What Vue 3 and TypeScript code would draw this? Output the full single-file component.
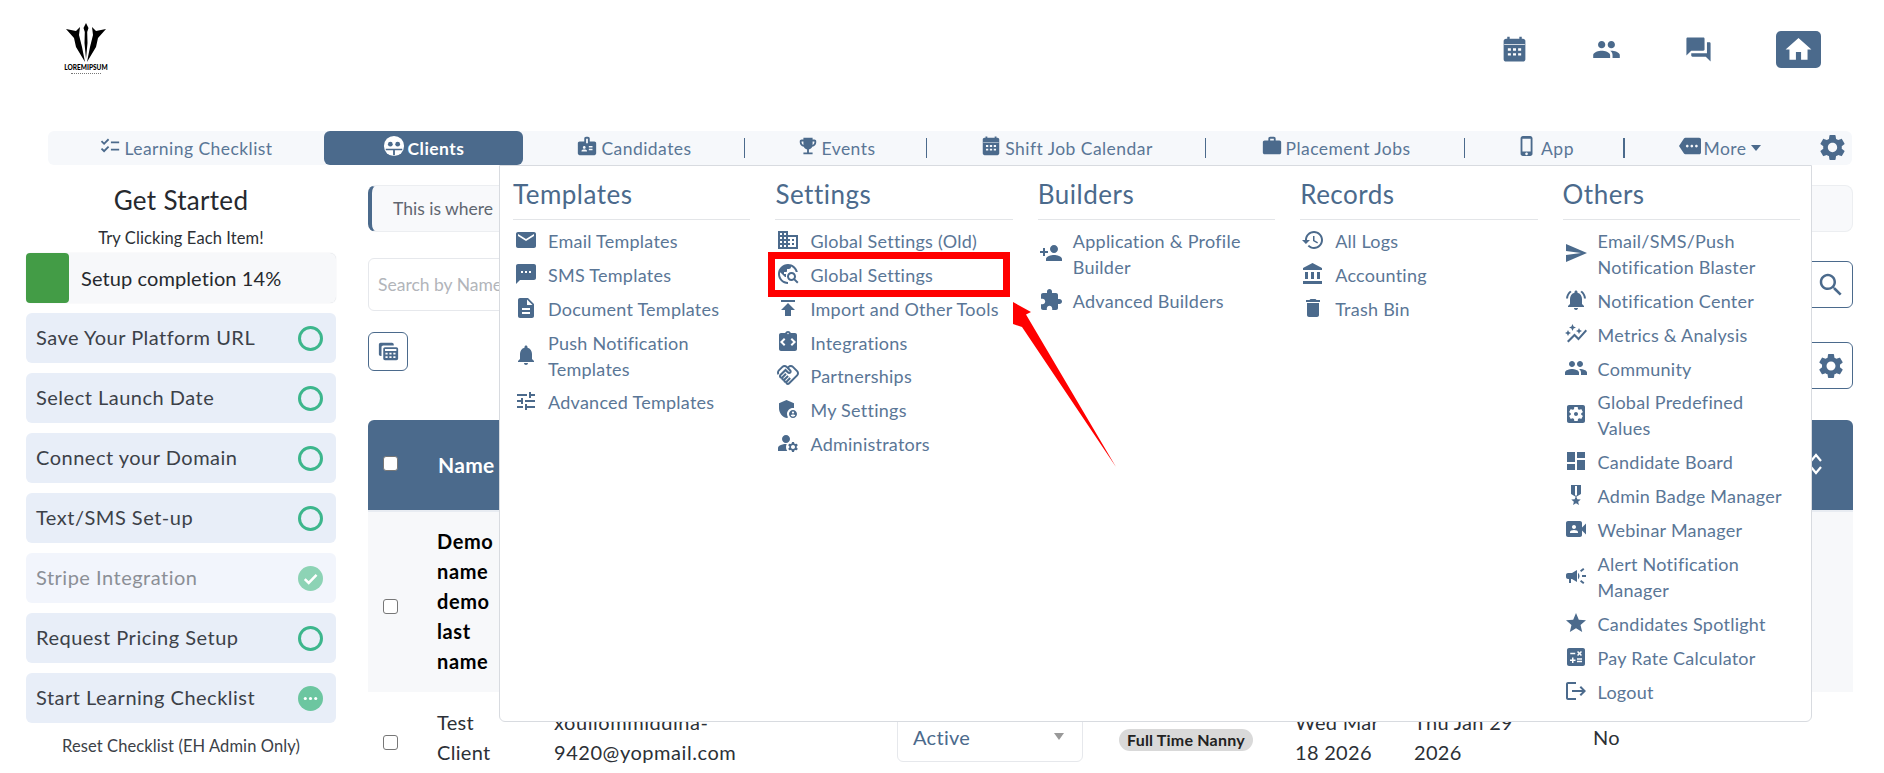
<template>
  <div class="page">
    <header class="top">
      <div class="logo">
        <svg class="logo-mark" viewBox="0 0 44 42">
          <path d="M22 2l2.500 5-1.300 4 .3 11L22 38l-1.500-16 .3-11-1.300-4z" />
          <path d="M2 8l10 2 4-4-1 8 3 12 3 15-9-15-2-9z" />
          <path d="M42 8l-10 2-4-4 1 8-3 12-3 15 9-15 2-9z" />
        </svg>
        <span class="logo-text">LOREMIPSUM</span>
        <span class="logo-sub"></span>
      </div>
      <div class="top-icons">
        <svg class="top-icon calendar" viewBox="0 0 24 24"><path :d="icons.calendarTop" /></svg>
        <svg class="top-icon" viewBox="0 0 24 24"><path :d="icons.people" /></svg>
        <svg class="top-icon" viewBox="0 0 24 24"><path :d="icons.forum" /></svg>
        <div class="home"><svg viewBox="0 0 24 24"><path :d="icons.home" /></svg></div>
      </div>
    </header>

    <nav class="nav">
      <a
        v-for="tab in tabs"
        :key="tab.label"
        class="tab"
        :class="{ active: tab.active, sep: tab.sep, thick: tab.thick }"
        :style="{ width: tab.width + 'px' }"
      >
        <svg v-if="tab.icon !== 'clients'" viewBox="0 0 24 24"><path :d="icons[tab.icon]" /></svg>
        <svg v-else viewBox="0 0 24 24">
          <circle cx="12" cy="12" r="11" fill="#fff" />
          <circle cx="8" cy="10" r="2.600" fill="#4b6a8c" />
          <circle cx="16" cy="10" r="2.600" fill="#4b6a8c" />
          <path d="M3 15h18v1.500H13V22h-2v-5.500H3z" fill="#4b6a8c" />
        </svg>
        <span>{{ tab.label }}</span>
        <i v-if="tab.caret" class="caret"></i>
      </a>
      <svg class="nav-gear" viewBox="0 0 24 24"><path :d="icons.settings" /></svg>

      <div class="menu">
        <section v-for="col in menu" :key="col.title" class="menu-col">
          <h3>{{ col.title }}</h3>
          <a v-for="item in col.items" :key="item.label" class="menu-item">
            <svg viewBox="0 0 24 24"><path :d="icons[item.icon]" /></svg>
            <span>{{ item.label }}</span>
          </a>
        </section>
      </div>
    </nav>

    <div class="body">
      <aside class="side">
        <h2>Get Started</h2>
        <p class="hint">Try Clicking Each Item!</p>
        <div class="progress">
          <div class="progress-fill" :style="{ width: '43px' }"></div>
          <span>Setup completion 14%</span>
        </div>
        <div v-for="step in steps" :key="step.label" class="step" :class="{ done: step.state === 'done' }">
          <span>{{ step.label }}</span>
          <i v-if="step.state === 'todo'" class="ring"></i>
          <svg v-else-if="step.state === 'done'" class="state" viewBox="0 0 24 24">
            <circle cx="12" cy="12" r="12" fill="#8dd3b5" />
            <path d="M6.500 12.500l3.800 3.800 7.500-7.800" fill="none" stroke="#fff" stroke-width="2.400" />
          </svg>
          <svg v-else class="state" viewBox="0 0 24 24">
            <circle cx="12" cy="12" r="12" fill="#6cc6a0" />
            <circle cx="7" cy="12" r="1.500" fill="#fff" />
            <circle cx="12" cy="12" r="1.500" fill="#fff" />
            <circle cx="17" cy="12" r="1.500" fill="#fff" />
          </svg>
        </div>
        <p class="reset">Reset Checklist (EH Admin Only)</p>
      </aside>

      <main class="main">
        <div class="banner">This is where</div>
        <div class="filters">
          <input class="search" type="text" placeholder="Search by Name" />
          <button class="icon-btn tall"><svg viewBox="0 0 24 24"><path :d="icons.search" /></svg></button>
        </div>
        <div class="tools">
          <button class="icon-btn small">
            <svg viewBox="0 0 24 24"><path :d="icons.tableCalc" /></svg>
          </button>
          <button class="icon-btn tall lower"><svg viewBox="0 0 24 24"><path :d="icons.settings" /></svg></button>
        </div>

        <div class="thead row">
          <input class="check head-check" type="checkbox" />
          <span class="th">Name</span>
          <svg class="sort" viewBox="0 0 14 24">
            <path d="M2 9l5-6 5 6M2 15l5 6 5-6" fill="none" stroke="#fff" stroke-width="2.200" />
          </svg>
        </div>
        <div class="row first">
          <input class="check" type="checkbox" />
          <span class="name strong">Demo name demo last name</span>
        </div>
        <div class="row second">
          <input class="check" type="checkbox" />
          <span class="name">Test Client</span>
          <span class="email">xouilommiddina-9420@yopmail.com</span>
          <div class="select-col">
            <div class="select">Active<i></i></div>
          </div>
          <div class="badge-col"><span class="badge">Full Time Nanny</span></div>
          <span class="date">Wed Mar 18 2026</span>
          <span class="date wide">Thu Jan 29 2026</span>
          <span class="no">No</span>
        </div>
      </main>
    </div>

    <!-- annotation drawn on top of the screenshot -->
    <div class="mark"></div>
    <svg class="arrow" viewBox="0 0 120 170">
      <path d="M3 2L21 12 16 14.500 106 167 12 27 3 24z" fill="#ff0000" />
    </svg>
  </div>
</template>

<script setup lang="ts">
const icons: Record<string, string> = {
  calendarTop:
    "M5 3h1V1.500h2V3h8V1.500h2V3h1c1.100 0 2 .9 2 2v15c0 1.100-.9 2-2 2H5c-1.100 0-2-.9-2-2V5c0-1.100.9-2 2-2zM3.500 7.500v.6h17v-.6zM6.500 11v2h2.500v-2zM10.750 11v2h2.500v-2zM15 11v2h2.500v-2zM6.500 15v2h2.500v-2zM10.750 15v2h2.500v-2zM15 15v2h2.500v-2z",
  people:
    "M16 11c1.660 0 2.990-1.340 2.990-3S17.660 5 16 5c-1.660 0-3 1.340-3 3s1.340 3 3 3zm-8 0c1.660 0 2.990-1.340 2.990-3S9.660 5 8 5C6.340 5 5 6.340 5 8s1.340 3 3 3zm0 2c-2.330 0-7 1.170-7 3.500V19h14v-2.500c0-2.330-4.670-3.500-7-3.500zm8 0c-.29 0-.62.02-.97.05 1.160.84 1.970 1.970 1.970 3.450V19h6v-2.500c0-2.330-4.670-3.500-7-3.500z",
  forum:
    "M21 6h-2v9H6v2c0 .55.45 1 1 1h11l4 4V7c0-.55-.45-1-1-1zm-4 6V3c0-.55-.45-1-1-1H3c-.55 0-1 .45-1 1v14l4-4h10c.55 0 1-.45 1-1z",
  home: "M10 20v-6h4v6h5v-8h3L12 3 2 12h3v8z",
  settings:
    "M19.140 12.940c.04-.3.06-.61.06-.94 0-.32-.02-.64-.07-.94l2.030-1.580c.18-.14.23-.41.12-.61l-1.920-3.320c-.12-.22-.37-.29-.59-.22l-2.390.96c-.5-.38-1.030-.7-1.620-.94l-.36-2.540c-.04-.24-.24-.41-.48-.41h-3.840c-.24 0-.43.17-.47.41l-.36 2.540c-.59.24-1.130.57-1.620.94l-2.390-.96c-.22-.08-.47 0-.59.22L2.740 8.870c-.12.21-.08.47.12.61l2.030 1.580c-.05.3-.09.63-.09.94s.02.64.07.94l-2.030 1.580c-.18.14-.23.41-.12.61l1.920 3.320c.12.22.37.29.59.22l2.390-.96c.5.38 1.030.7 1.620.94l.36 2.540c.05.24.24.41.48.41h3.840c.24 0 .44-.17.47-.41l.36-2.540c.59-.24 1.130-.56 1.620-.94l2.390.96c.22.08.47 0 .59-.22l1.920-3.320c.12-.22.07-.47-.12-.61l-2.010-1.580zM12 15.600c-1.980 0-3.600-1.620-3.600-3.600s1.620-3.600 3.600-3.600 3.600 1.620 3.600 3.600-1.620 3.600-3.600 3.600z",
  search:
    "M15.500 14h-.79l-.28-.27C15.410 12.590 16 11.110 16 9.500 16 5.910 13.090 3 9.500 3S3 5.910 3 9.500 5.910 16 9.500 16c1.610 0 3.090-.59 4.230-1.570l.27.28v.79l5 4.990L20.490 19l-4.990-5zm-6 0C7.010 14 5 11.990 5 9.500S7.010 5 9.500 5 14 7.010 14 9.500 11.990 14 9.500 14z",
  checklist:
    "M22 7h-9v2h9V7zm0 8h-9v2h9v-2zM5.540 11L2 7.460l1.410-1.410 2.120 2.120 4.240-4.240 1.410 1.410L5.540 11zm0 8L2 15.460l1.410-1.410 2.120 2.120 4.240-4.240 1.410 1.410L5.540 19z",
  badge:
    "M20 7h-5V4c0-1.100-.9-2-2-2h-2c-1.100 0-2 .9-2 2v3H4c-1.100 0-2 .9-2 2v11c0 1.100.9 2 2 2h16c1.100 0 2-.9 2-2V9c0-1.100-.9-2-2-2zM9 12c.83 0 1.500.67 1.500 1.500S9.830 15 9 15s-1.500-.67-1.500-1.500S8.170 12 9 12zm3 6H6v-.75c0-1 2-1.500 3-1.500s3 .5 3 1.500V18zm1-9h-2V4h2v5zm5 7.500h-4V15h4v1.500zm0-3h-4V12h4v1.500z",
  trophy:
    "M19 5h-2V3H7v2H5c-1.100 0-2 .9-2 2v1c0 2.550 1.920 4.630 4.390 4.940.63 1.500 1.980 2.630 3.610 2.960V19H7v2h10v-2h-4v-3.100c1.630-.33 2.980-1.460 3.610-2.960C19.080 12.630 21 10.550 21 8V7c0-1.100-.9-2-2-2zM5 8V7h2v3.820C5.840 10.400 5 9.300 5 8zm14 0c0 1.300-.84 2.400-2 2.820V7h2v1z",
  work: "M20 6h-4V4c0-1.100-.9-2-2-2h-4c-1.100 0-2 .9-2 2v2H4c-1.100 0-1.990.9-1.990 2L2 19c0 1.100.9 2 2 2h16c1.100 0 2-.9 2-2V8c0-1.100-.9-2-2-2zm-6 0h-4V4h4v2z",
  phone:
    "M15.500 1h-8C6.120 1 5 2.120 5 3.500v17C5 21.880 6.120 23 7.500 23h8c1.380 0 2.500-1.120 2.500-2.500v-17C18 2.120 16.880 1 15.500 1zm-4 21c-.83 0-1.500-.67-1.500-1.500s.67-1.500 1.500-1.500 1.500.67 1.500 1.500-.67 1.500-1.500 1.500zm4.500-4H7V4h9v14z",
  more: "M22 3H7c-.69 0-1.230.35-1.590.88L0 12l5.410 8.110c.36.53.9.89 1.590.89h15c1.100 0 2-.9 2-2V5c0-1.100-.9-2-2-2zM9 13.500c-.83 0-1.500-.67-1.500-1.500s.67-1.500 1.500-1.500 1.500.67 1.500 1.500-.67 1.500-1.500 1.500zm5 0c-.83 0-1.500-.67-1.500-1.500s.67-1.500 1.500-1.500 1.500.67 1.500 1.500-.67 1.500-1.500 1.500zm5 0c-.83 0-1.500-.67-1.500-1.500s.67-1.500 1.500-1.500 1.500.67 1.500 1.500-.67 1.500-1.500 1.500z",
  email: "M20 4H4c-1.100 0-1.990.9-1.990 2L2 18c0 1.100.9 2 2 2h16c1.100 0 2-.9 2-2V6c0-1.100-.9-2-2-2zm0 4l-8 5-8-5V6l8 5 8-5v2z",
  sms: "M20 2H4c-1.100 0-1.990.9-1.990 2L2 22l4-4h14c1.100 0 2-.9 2-2V4c0-1.100-.9-2-2-2zM9 11H7V9h2v2zm4 0h-2V9h2v2zm4 0h-2V9h2v2z",
  doc: "M14 2H6c-1.100 0-1.990.9-1.990 2L4 20c0 1.100.89 2 1.990 2H18c1.100 0 2-.9 2-2V8l-6-6zm2 16H8v-2h8v2zm0-4H8v-2h8v2zm-3-5V3.500L18.500 9H13z",
  bell: "M12 22c1.100 0 2-.9 2-2h-4c0 1.100.89 2 2 2zm6-6v-5c0-3.070-1.640-5.640-4.500-6.320V4c0-.83-.67-1.500-1.500-1.500s-1.500.67-1.500 1.500v.68C7.630 5.360 6 7.920 6 11v5l-2 2v1h16v-1l-2-2z",
  tune: "M3 17v2h6v-2H3zM3 5v2h10V5H3zm10 16v-2h8v-2h-8v-2h-2v6h2zM7 9v2H3v2h4v2h2V9H7zm14 4v-2H11v2h10zm-6-4h2V7h4V5h-4V3h-2v6z",
  domain:
    "M12 7V3H2v18h20V7H12zM6 19H4v-2h2v2zm0-4H4v-2h2v2zm0-4H4V9h2v2zm0-4H4V5h2v2zm4 12H8v-2h2v2zm0-4H8v-2h2v2zm0-4H8V9h2v2zm0-4H8V5h2v2zm10 12h-8v-2h2v-2h-2v-2h2v-2h-2V9h8v10zm-2-8h-2v2h2v-2zm0 4h-2v2h2v-2z",
  explore:
    "M19.300 16.900c.4-.7.7-1.500.7-2.400 0-2.500-2-4.500-4.500-4.500S11 12 11 14.500s2 4.500 4.500 4.500c.9 0 1.700-.3 2.400-.7l3.200 3.200 1.400-1.400-3.200-3.200zm-3.800.1c-1.400 0-2.500-1.100-2.500-2.500s1.100-2.500 2.500-2.500 2.500 1.100 2.500 2.500-1.100 2.500-2.500 2.500zM12 20v2C6.480 22 2 17.520 2 12S6.480 2 12 2c4.840 0 8.870 3.440 9.800 8h-2.070c-.64-2.460-2.400-4.470-4.730-5.410V5c0 1.100-.9 2-2 2h-2v2c0 .55-.45 1-1 1H8v2h2v3H9l-4.790-4.790C4.080 10.790 4 11.380 4 12c0 4.410 3.590 8 8 8z",
  publish: "M5 4v2h14V4H5zm0 10h4v6h6v-6h4l-7-7-7 7z",
  integrations:
    "M19 3h-4.180C14.400 1.840 13.300 1 12 1s-2.400.84-2.820 2H5c-1.100 0-2 .9-2 2v14c0 1.100.9 2 2 2h14c1.100 0 2-.9 2-2V5c0-1.100-.9-2-2-2zm-7-.25c.41 0 .75.34.75.75s-.34.75-.75.75-.75-.34-.75-.75.34-.75.75-.75zM9.410 14.590L8 16l-4-4 4-4 1.410 1.410L6.830 12l2.580 2.590zM16 16l-1.410-1.410L17.170 12l-2.580-2.590L16 8l4 4-4 4z",
  handshake:
    "M12.220 19.850c-.18.18-.5.21-.71 0-.18-.18-.21-.5 0-.71l3.390-3.390-1.410-1.410-3.390 3.390c-.19.2-.51.19-.71 0-.21-.21-.18-.53 0-.71l3.390-3.390-1.410-1.410-3.390 3.390c-.18.18-.5.21-.71 0-.19-.19-.19-.51 0-.71l3.390-3.390-1.420-1.410-3.390 3.390c-.18.18-.5.21-.71 0-.19-.2-.19-.51 0-.71L9.520 8.400l1.870 1.860c.95.95 2.590.94 3.540 0 .98-.98.98-2.560 0-3.540l-1.860-1.860.28-.28c.78-.78 2.050-.78 2.830 0l4.240 4.240c.78.78.78 2.050 0 2.830l-8.200 8.200zm9.610-6.780c1.560-1.560 1.560-4.090 0-5.660l-4.240-4.240c-1.560-1.560-4.090-1.560-5.660 0l-.28.28-.28-.28c-1.560-1.560-4.090-1.560-5.660 0L2.170 6.710c-1.420 1.420-1.550 3.630-.4 5.190l1.450-1.450c-.39-.75-.26-1.700.37-2.330l3.540-3.540c.78-.78 2.050-.78 2.830 0l3.560 3.560c.18.18.21.5 0 .71-.21.21-.53.18-.71 0L9.520 5.570l-5.800 5.790c-.98.97-.98 2.560 0 3.540.39.39.89.63 1.420.7.07.52.3 1.020.7 1.420.4.4.9.63 1.420.7.07.52.3 1.020.7 1.420.4.4.9.63 1.420.7.07.54.31 1.030.7 1.420.47.47 1.100.73 1.770.73.67 0 1.300-.26 1.770-.73l8.210-8.190z",
  shield:
    "M17 11c.34 0 .67.04 1 .09V6.270L10.500 3 3 6.270v4.910c0 4.540 3.200 8.790 7.500 9.820.55-.13 1.080-.32 1.600-.55-.69-.98-1.100-2.170-1.100-3.450 0-3.310 2.690-6 6-6zM17 13c-2.210 0-4 1.790-4 4s1.790 4 4 4 4-1.790 4-4-1.790-4-4-4zm0 1.380c.62 0 1.120.51 1.120 1.120s-.51 1.120-1.120 1.120-1.120-.51-1.120-1.120.5-1.120 1.120-1.120zm0 5.370c-.93 0-1.740-.46-2.240-1.170.05-.72 1.510-1.080 2.240-1.080s2.190.36 2.240 1.080c-.5.71-1.310 1.170-2.240 1.170z",
  admins:
    "M10 4c-2.210 0-4 1.790-4 4s1.790 4 4 4 4-1.790 4-4-1.790-4-4-4zM10.670 13.020c-.22-.01-.44-.02-.67-.02-2.420 0-4.680.67-6.610 1.820-.88.52-1.390 1.500-1.390 2.530V20h9.260c-.79-1.130-1.260-2.510-1.260-4 0-1.070.25-2.070.67-2.980zM20.750 16c0-.22-.03-.42-.06-.63l1.140-1.010-1-1.730-1.450.49c-.32-.27-.68-.48-1.080-.63L18 11h-2l-.3 1.490c-.4.15-.76.36-1.080.63l-1.450-.49-1 1.730 1.140 1.010c-.03.21-.06.41-.06.63s.03.42.06.63l-1.140 1.010 1 1.730 1.450-.49c.32.27.68.48 1.080.63L16 21h2l.3-1.490c.4-.15.76-.36 1.080-.63l1.450.49 1-1.730-1.140-1.010c.03-.21.06-.41.06-.63zM17 18c-1.100 0-2-.9-2-2s.9-2 2-2 2 .9 2 2-.9 2-2 2z",
  personAdd:
    "M15 12c2.210 0 4-1.790 4-4s-1.790-4-4-4-4 1.790-4 4 1.790 4 4 4zm-9-2V7H4v3H1v2h3v3h2v-3h3v-2H6zm9 4c-2.670 0-8 1.340-8 4v2h16v-2c0-2.660-5.330-4-8-4z",
  extension:
    "M20.500 11H19V7c0-1.100-.9-2-2-2h-4V3.500C13 2.120 11.880 1 10.500 1S8 2.120 8 3.500V5H4c-1.100 0-1.990.9-1.990 2v3.800H3.500c1.490 0 2.700 1.210 2.700 2.700s-1.210 2.700-2.700 2.700H2V20c0 1.100.9 2 2 2h3.800v-1.500c0-1.490 1.210-2.700 2.700-2.700 1.490 0 2.700 1.210 2.700 2.700V22H17c1.100 0 2-.9 2-2v-4h1.500c1.380 0 2.500-1.120 2.500-2.500S21.880 11 20.500 11z",
  history:
    "M13 3c-4.970 0-9 4.030-9 9H1l3.890 3.890.07.14L9 12H6c0-3.870 3.130-7 7-7s7 3.130 7 7-3.130 7-7 7c-1.930 0-3.680-.79-4.940-2.060l-1.420 1.420C8.270 19.990 10.510 21 13 21c4.970 0 9-4.030 9-9s-4.030-9-9-9zm-1 5v5l4.280 2.540.72-1.210-3.500-2.080V8H12z",
  bank: "M4 10v7h3v-7H4zm6 0v7h3v-7h-3zM2 22h19v-3H2v3zm14-12v7h3v-7h-3zm-4.500-9L2 6v2h19V6l-9.500-5z",
  trash: "M6 19c0 1.100.9 2 2 2h8c1.100 0 2-.9 2-2V7H6v12zM19 4h-3.500l-1-1h-5l-1 1H5v2h14V4z",
  send: "M2.010 21L23 12 2.010 3 2 10l15 2-15 2z",
  bellActive:
    "M7.580 4.080L6.150 2.650C3.750 4.480 2.170 7.300 2.030 10.500h2c.15-2.650 1.510-4.970 3.550-6.420zm12.390 6.420h2c-.15-3.200-1.730-6.020-4.120-7.850l-1.420 1.430c2.020 1.450 3.390 3.770 3.540 6.420zM18 11c0-3.070-1.640-5.640-4.500-6.320V4c0-.83-.67-1.500-1.500-1.500s-1.500.67-1.500 1.500v.68C7.630 5.360 6 7.920 6 11v5l-2 2v1h16v-1l-2-2v-5zm-6 11c.14 0 .27-.01.4-.04.65-.14 1.180-.58 1.440-1.180.1-.24.15-.5.15-.78h-4c.01 1.100.9 2 2.010 2z",
  graph:
    "M14.060 9.940L12 9l2.060-.94L15 6l.94 2.060L18 9l-2.060.94L15 12zM4 14l.94-2.060L7 11l-2.060-.94L4 8l-.94 2.060L1 11l2.060.94zm4.500-5l1.090-2.410L12 5.500 9.590 4.410 8.500 2 7.410 4.410 5 5.500l2.410 1.090zm-4 11.500l6-6.010 4 4L23 8.930l-1.410-1.410-7.090 7.970-4-4L3 19z",
  predefined:
    "M12 10c-1.100 0-2 .9-2 2s.9 2 2 2 2-.9 2-2-.9-2-2-2zm7-7H5c-1.110 0-2 .9-2 2v14c0 1.100.89 2 2 2h14c1.110 0 2-.9 2-2V5c0-1.100-.89-2-2-2zm-1.750 9c0 .23-.02.46-.05.68l1.480 1.160c.13.11.17.3.08.45l-1.400 2.420c-.09.15-.27.21-.43.15l-1.740-.7c-.36.28-.76.51-1.180.69l-.26 1.850c-.03.17-.18.3-.35.3h-2.800c-.17 0-.32-.13-.35-.29l-.26-1.850c-.43-.18-.82-.41-1.180-.69l-1.740.7c-.16.06-.34 0-.43-.15l-1.400-2.420c-.09-.15-.05-.34.08-.45l1.480-1.160c-.03-.23-.05-.46-.05-.69 0-.23.02-.46.05-.68l-1.480-1.160c-.13-.11-.17-.3-.08-.45l1.400-2.420c.09-.15.27-.21.43-.15l1.740.7c.36-.28.76-.51 1.180-.69l.26-1.850c.03-.17.18-.3.35-.3h2.800c.17 0 .32.13.35.29l.26 1.850c.43.18.82.41 1.180.69l1.740-.7c.16-.06.34 0 .43.15l1.400 2.420c.09.15.05.34-.08.45l-1.480 1.160c.03.23.05.46.05.69z",
  dashboard: "M3 13h8V3H3v10zm0 8h8v-6H3v6zm10 0h8V11h-8v10zm0-18v6h8V3h-8z",
  medal:
    "M17 10.430V2H7v8.430c0 .35.18.68.49.86l4.180 2.510-.99 2.340-3.410.29 2.590 2.240L9.070 22 12 20.230 14.930 22l-.78-3.330 2.590-2.240-3.410-.29-.99-2.340 4.180-2.510c.3-.18.48-.5.48-.86zm-4 1.800l-1 .6-1-.6V3h2v9.230z",
  webinar:
    "M18 10.480V6c0-1.100-.9-2-2-2H4c-1.100 0-2 .9-2 2v12c0 1.100.9 2 2 2h12c1.100 0 2-.9 2-2v-4.480l4 3.980v-11l-4 3.980zM10 8c1.100 0 2 .9 2 2s-.9 2-2 2-2-.9-2-2 .9-2 2-2zm4 8H6v-.57c0-.81.48-1.530 1.220-1.850.85-.37 1.790-.58 2.780-.58.99 0 1.930.21 2.780.58.74.32 1.220 1.040 1.220 1.850V16z",
  campaign:
    "M18 11v2h4v-2h-4zm-2 6.610c.96.71 2.210 1.650 3.200 2.390.4-.53.8-1.070 1.200-1.600-.99-.74-2.240-1.680-3.200-2.400-.4.54-.8 1.080-1.200 1.610zM20.400 5.600c-.4-.53-.8-1.070-1.200-1.600-.99.74-2.240 1.680-3.200 2.400.4.53.8 1.070 1.200 1.600.96-.72 2.210-1.650 3.200-2.400zM4 9c-1.100 0-2 .9-2 2v2c0 1.100.9 2 2 2h1v4h2v-4h1l5 3V6L8 9H4zm11.500 3c0-1.330-.58-2.530-1.500-3.350v6.690c.92-.81 1.500-2.010 1.500-3.340z",
  star: "M12 17.270L18.180 21l-1.640-7.030L22 9.240l-7.190-.61L12 2 9.190 8.630 2 9.240l5.460 4.730L5.820 21z",
  calc: "M19 3H5c-1.100 0-2 .9-2 2v14c0 1.100.9 2 2 2h14c1.100 0 2-.9 2-2V5c0-1.100-.9-2-2-2zm-5.970 4.060L14.090 6l1.410 1.410L16.910 6l1.060 1.060-1.410 1.410 1.410 1.410-1.060 1.060-1.410-1.400-1.410 1.410-1.060-1.060 1.410-1.410-1.410-1.420zm-6.780.66h5v1.500h-5v-1.500zM11.500 16h-2v2H8v-2H6v-1.500h2v-2h1.500v2h2V16zm6.500 1.250h-5v-1.500h5v1.500zm0-2.500h-5v-1.500h5v1.500z",
  logout: "M17 7l-1.410 1.410L18.170 11H8v2h10.170l-2.580 2.580L17 17l5-5zM4 5h8V3H4c-1.100 0-2 .9-2 2v14c0 1.100.9 2 2 2h8v-2H4V5z",
  tableCalc:
    "M3 2h13c1 0 2 1 2 2v1H6C4.900 5 4 5.900 4 7v10H3c-1 0-2-1-2-2V4c0-1 1-2 2-2zM8 7h13c1.100 0 2 .9 2 2v11c0 1.100-.9 2-2 2H8c-1.100 0-2-.9-2-2V9c0-1.100.9-2 2-2zM8 9v2.500h13V9zM8.500 13.500v2h2.500v-2zM13 13.500v2h2.500v-2zM17.500 13.500v2H20v-2zM8.500 17.500v2h2.500v-2zM13 17.500v2h2.500v-2zM17.500 17.500v2H20v-2z",
};

interface Tab {
  label: string;
  icon: string;
  width: number;
  active?: boolean;
  sep?: boolean;
  thick?: boolean;
  caret?: boolean;
}

const tabs: Tab[] = [
  { label: "Learning Checklist", icon: "checklist", width: 276 },
  { label: "Clients", icon: "clients", width: 199, active: true },
  { label: "Candidates", icon: "badge", width: 222, sep: true },
  { label: "Events", icon: "trophy", width: 182, sep: true },
  { label: "Shift Job Calendar", icon: "calendarTop", width: 279, sep: true },
  { label: "Placement Jobs", icon: "work", width: 259, sep: true },
  { label: "App", icon: "phone", width: 160, sep: true, thick: true },
  { label: "More", icon: "more", width: 190, caret: true },
];

const menu = [
  {
    title: "Templates",
    items: [
      { label: "Email Templates", icon: "email" },
      { label: "SMS Templates", icon: "sms" },
      { label: "Document Templates", icon: "doc" },
      { label: "Push Notification Templates", icon: "bell" },
      { label: "Advanced Templates", icon: "tune" },
    ],
  },
  {
    title: "Settings",
    items: [
      { label: "Global Settings (Old)", icon: "domain" },
      { label: "Global Settings", icon: "explore" },
      { label: "Import and Other Tools", icon: "publish" },
      { label: "Integrations", icon: "integrations" },
      { label: "Partnerships", icon: "handshake" },
      { label: "My Settings", icon: "shield" },
      { label: "Administrators", icon: "admins" },
    ],
  },
  {
    title: "Builders",
    items: [
      { label: "Application & Profile Builder", icon: "personAdd" },
      { label: "Advanced Builders", icon: "extension" },
    ],
  },
  {
    title: "Records",
    items: [
      { label: "All Logs", icon: "history" },
      { label: "Accounting", icon: "bank" },
      { label: "Trash Bin", icon: "trash" },
    ],
  },
  {
    title: "Others",
    items: [
      { label: "Email/SMS/Push Notification Blaster", icon: "send" },
      { label: "Notification Center", icon: "bellActive" },
      { label: "Metrics & Analysis", icon: "graph" },
      { label: "Community", icon: "people" },
      { label: "Global Predefined Values", icon: "predefined" },
      { label: "Candidate Board", icon: "dashboard" },
      { label: "Admin Badge Manager", icon: "medal" },
      { label: "Webinar Manager", icon: "webinar" },
      { label: "Alert Notification Manager", icon: "campaign" },
      { label: "Candidates Spotlight", icon: "star" },
      { label: "Pay Rate Calculator", icon: "calc" },
      { label: "Logout", icon: "logout" },
    ],
  },
];

const steps = [
  { label: "Save Your Platform URL", state: "todo" },
  { label: "Select Launch Date", state: "todo" },
  { label: "Connect your Domain", state: "todo" },
  { label: "Text/SMS Set-up", state: "todo" },
  { label: "Stripe Integration", state: "done" },
  { label: "Request Pricing Setup", state: "todo" },
  { label: "Start Learning Checklist", state: "active" },
];
</script>

<style scoped>
.page {
  position: relative;
  width: 1884px;
  height: 773px;
  overflow: hidden;
  background: #fff;
  color: #2c3036;
  font-family: "Lato", "Open Sans", sans-serif;
}

svg {
  fill: #4b6a8c;
  fill-rule: evenodd;
  flex: none;
  display: block;
}

.top {
  height: 131px;
  box-sizing: border-box;
  padding: 21px 63px 0 64px;
  display: flex;
  justify-content: space-between;
  align-items: flex-start;
}

.logo {
  width: 44px;
  display: flex;
  flex-direction: column;
  align-items: center;
}

.logo-mark {
  width: 44px;
  height: 42px;
  fill: #000;
}

.logo-text {
  font-size: 6.500px;
  line-height: 8px;
  font-weight: 900;
  color: #000;
  margin-top: 1px;
}

.logo-sub {
  width: 30px;
  border-top: 1px dotted #777;
  margin-top: 1px;
}

.top-icons {
  display: flex;
  align-items: center;
  margin-top: 10px;
}

.top-icon {
  width: 29px;
  height: 29px;
  margin-right: 63px;
}

.home {
  width: 45px;
  height: 37px;
  background: #4b6a8c;
  border-radius: 5px;
  display: flex;
  align-items: center;
  justify-content: center;
}

.home svg {
  width: 31px;
  height: 31px;
  fill: #fff;
}

.nav {
  position: relative;
  z-index: 5;
  width: 1804px;
  height: 34px;
  margin-left: 48px;
  background: #f6f8fb;
  border-radius: 6px;
  display: flex;
  align-items: stretch;
}

.tab {
  position: relative;
  box-sizing: border-box;
  display: flex;
  align-items: center;
  justify-content: center;
  gap: 3px;
  font-size: 17.500px;
  letter-spacing: 0.45px;
  color: #5a7696;
}

.tab svg {
  width: 22px;
  height: 22px;
  margin-top: -5px;
}

.tab span {
  padding-top: 1px;
}

.tab.active {
  background: #4b6a8c;
  border-radius: 6px;
  color: #fff;
  font-weight: 700;
}

.tab.sep::after {
  content: "";
  position: absolute;
  right: 0;
  top: 7px;
  height: 20px;
  border-right: 1px solid #4b6a8c;
}

.tab.thick::after {
  border-right-width: 2px;
}

.caret {
  border: 5px solid transparent;
  border-top: 6px solid #4b6a8c;
  border-bottom: 0;
  margin-left: 2px;
}

.nav-gear {
  width: 31px;
  height: 31px;
  margin: 1px 0 0 2px;
}

.menu {
  position: absolute;
  left: 451px;
  top: 34px;
  width: 1313px;
  height: 557px;
  box-sizing: border-box;
  padding: 0 11px 0 13px;
  background: #fff;
  border: 1px solid #d8dbe0;
  border-radius: 0 0 6px 6px;
  display: grid;
  grid-template-columns: repeat(5, 1fr);
  column-gap: 25px;
  align-items: start;
}

.menu-col h3 {
  margin: 0 0 4px;
  padding: 10px 0 7px;
  line-height: 36px;
  font-size: 26px;
  letter-spacing: 0.5px;
  font-weight: 400;
  color: #4b6a8c;
  border-bottom: 1px solid #e3e5e8;
}

.menu-item {
  display: flex;
  align-items: center;
  gap: 10px;
  padding: 3.950px 0 3.950px 1px;
  font-size: 18px;
  line-height: 26px;
  letter-spacing: 0.25px;
  color: #5a7696;
}

.menu-item svg {
  width: 24px;
  height: 24px;
  margin-top: -2px;
}

.body {
  display: flex;
  padding-left: 26px;
}

.side {
  width: 310px;
  padding-top: 20px;
  text-align: center;
}

.side h2 {
  margin: 0;
  font-size: 26px;
  line-height: 30px;
  letter-spacing: 0.3px;
  font-weight: 400;
  color: #26292e;
}

.hint {
  margin: 13px 0 5px;
  font-size: 16.500px;
  line-height: 20px;
  letter-spacing: 0.1px;
  color: #2c3036;
}

.progress {
  height: 50px;
  box-sizing: border-box;
  display: flex;
  align-items: center;
  background: #f7f8fa;
  border-radius: 6px;
  box-shadow: 0 0 1px #c8ccd2;
  font-size: 20px;
  letter-spacing: 0.1px;
  color: #26292e;
}

.progress-fill {
  height: 100%;
  background: #439c46;
  border-radius: 4px;
  margin-right: 12px;
}

.step {
  height: 50px;
  margin-top: 10px;
  padding: 0 13px 0 10px;
  display: flex;
  align-items: center;
  justify-content: space-between;
  background: #e8eef8;
  border-radius: 6px;
  font-size: 20px;
  letter-spacing: 0.5px;
  color: #3c4148;
}

.step span {
  margin-top: -2px;
}

.step.done {
  background: #f2f5fc;
  color: #8b8f96;
}

.ring {
  width: 25px;
  height: 25px;
  box-sizing: border-box;
  border: 3px solid #3cb68c;
  border-radius: 50%;
}

.state {
  width: 25px;
  height: 25px;
}

.reset {
  margin: 13px 0 0;
  font-size: 16.500px;
  line-height: 20px;
  letter-spacing: 0.1px;
  color: #3c4148;
}

.main {
  width: 1485px;
  margin-left: 32px;
  padding-top: 20px;
}

.banner {
  height: 47px;
  box-sizing: border-box;
  padding-left: 21px;
  display: flex;
  align-items: center;
  background: #f8f9fb;
  border: 1px solid #eceef1;
  border-left: 4px solid #4b6a8c;
  border-radius: 8px;
  font-size: 17.500px;
  color: #5f6670;
}

.filters {
  margin-top: 26px;
  height: 53px;
  display: flex;
  align-items: center;
  gap: 10px;
}

.search {
  flex: 1;
  height: 53px;
  box-sizing: border-box;
  padding: 0 9px;
  border: 1px solid #e6e8ec;
  border-radius: 6px;
  font: inherit;
  font-size: 17.500px;
}

.search::placeholder {
  color: #b2b5ba;
}

.tools {
  margin-top: 21px;
  height: 57px;
  margin-bottom: 31px;
  display: flex;
  justify-content: space-between;
  align-items: flex-start;
}

.icon-btn {
  padding: 0;
  background: #fff;
  border: 1px solid #4b6a8c;
  border-radius: 6px;
  display: flex;
  align-items: center;
  justify-content: center;
}

.icon-btn.tall {
  width: 60px;
  height: 47px;
}

.icon-btn.tall svg {
  width: 30px;
  height: 30px;
  margin-left: 16px;
}

.icon-btn.lower {
  margin-top: 10px;
}

.icon-btn.small {
  width: 40px;
  height: 39px;
}

.icon-btn.small svg {
  width: 21px;
  height: 21px;
}

.row {
  display: grid;
  grid-template-columns: 70px 116px 343px 222px 176px 119px 179px 1fr;
  align-items: center;
  font-size: 20px;
  letter-spacing: 0.3px;
  line-height: 30px;
}

.thead {
  position: relative;
  height: 90px;
  background: #4b6a8c;
  border-bottom: 2px solid #e8ecf2;
  border-radius: 6px 6px 0 0;
}

.th {
  color: #fff;
  font-size: 21px;
  font-weight: 700;
}

.sort {
  position: absolute;
  right: 30px;
  top: 32px;
  width: 14px;
  height: 24px;
}

.check {
  appearance: none;
  width: 15px;
  height: 15px;
  margin: 8px 0 0 15px;
  background: #fff;
  border: 1.500px solid #777;
  border-radius: 3px;
}

.head-check {
  margin-top: -4px;
}

.first {
  height: 180px;
  background: #f7f8fa;
}

.second {
  height: 92px;
}

.name {
  display: block;
  max-width: 66px;
  margin: -2px 0 0 -1px;
}

.strong {
  font-weight: 700;
  letter-spacing: 0.6px;
  color: #000;
}

.email {
  max-width: 210px;
  margin-top: -2px;
  letter-spacing: 0.55px;
}

.select-col {
  display: flex;
}

.select {
  position: relative;
  width: 186px;
  height: 50px;
  margin-top: -2px;
  box-sizing: border-box;
  padding-left: 15px;
  display: flex;
  align-items: center;
  background: #fff;
  border: 1px solid #e6e8ec;
  border-radius: 6px;
  color: #4b6a8c;
  font-size: 20px;
}

.select i {
  position: absolute;
  right: 18px;
  top: 20px;
  border: 5.500px solid transparent;
  border-top: 7px solid #999;
  border-bottom: 0;
}

.badge {
  display: inline-block;
  margin-top: -2px;
  padding: 0 8px;
  background: #d9d9d9;
  border-radius: 11px;
  font-size: 16px;
  letter-spacing: 0.2px;
  line-height: 22px;
  font-weight: 700;
  color: #222;
}

.date {
  max-width: 95px;
  margin-top: -2px;
}

.date.wide {
  max-width: 115px;
}

.no {
  margin-top: -2px;
}

.mark {
  position: absolute;
  left: 768px;
  top: 252px;
  width: 242px;
  height: 45px;
  box-sizing: border-box;
  border: 7px solid #ff0000;
  z-index: 10;
}

.arrow {
  position: absolute;
  left: 1010px;
  top: 300px;
  width: 120px;
  height: 170px;
  z-index: 10;
}
</style>

<style>
html,
body {
  margin: 0;
  overflow: hidden;
}
</style>
